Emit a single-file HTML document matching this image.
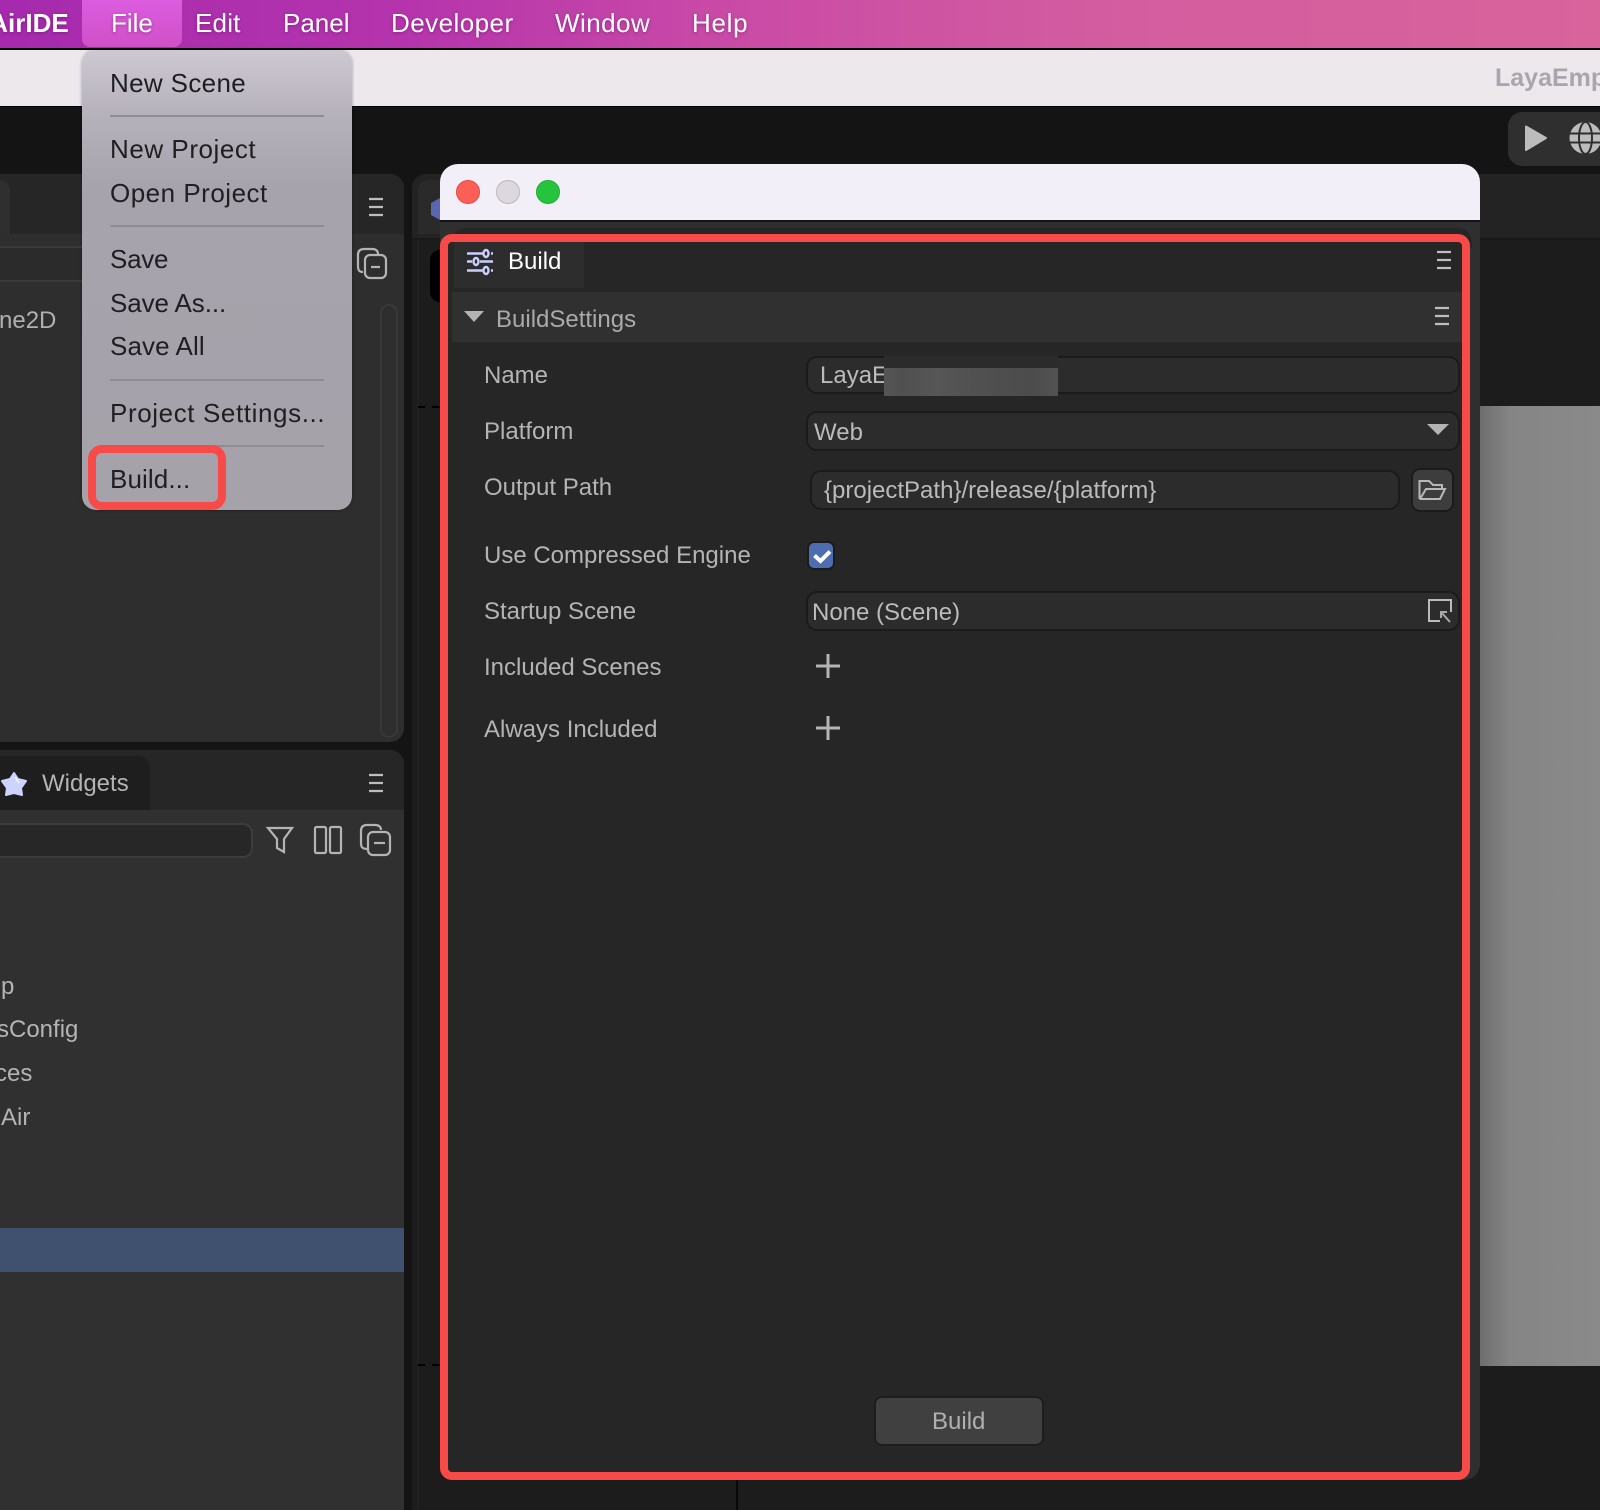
<!DOCTYPE html>
<html><head><meta charset="utf-8"><style>
html,body{margin:0;padding:0;background:#141414}
#r{position:relative;width:1600px;height:1510px;overflow:hidden;background:#141414;font-family:"Liberation Sans",sans-serif}
#r div,#r svg{position:absolute;box-sizing:border-box}
.t{white-space:nowrap;line-height:30px;height:30px;font-size:24px;color:#b4b4b4}
.m{white-space:nowrap;line-height:32px;height:32px;font-size:26px;color:#fff;text-shadow:0 1px 3px rgba(60,0,60,.35)}
.i{white-space:nowrap;line-height:32px;height:32px;font-size:26px;color:#1f1e22;left:110px}
.s{left:110px;width:214px;height:2px;background:#8f8c96}
.f{background:#2c2c2c;border:2px solid #1b1b1b;border-radius:11px}
svg{overflow:visible}
</style></head><body><div id="r">

<!-- top bars -->
<div style="left:0;top:0;width:1600px;height:48px;background:linear-gradient(90deg,#a52aad 0,#b534ad 25%,#c94aa6 45%,#d35d9f 70%,#d9639b 100%)"></div>
<div style="left:0;top:48px;width:1600px;height:2px;background:#000"></div>
<div style="left:0;top:50px;width:1600px;height:56px;background:#ece8ec"></div>
<div style="left:0;top:106px;width:1600px;height:1px;background:#000"></div>
<div style="left:82px;top:0;width:100px;height:47px;background:linear-gradient(180deg,#dc5ce0,#cf50c6);border-radius:0 0 8px 8px"></div>
<div class="m" style="left:-70px;top:7px;font-weight:bold;font-size:26px">LayaAirIDE</div>
<div class="m" style="left:111px;top:7px">File</div>
<div class="m" style="left:195px;top:7px;letter-spacing:.2px">Edit</div>
<div class="m" style="left:283px;top:7px">Panel</div>
<div class="m" style="left:391px;top:7px;letter-spacing:.45px">Developer</div>
<div class="m" style="left:555px;top:7px;letter-spacing:.45px">Window</div>
<div class="m" style="left:692px;top:7px;letter-spacing:.7px">Help</div>
<div class="t" style="left:1495px;top:63px;font-weight:bold;color:#aaa5ad;font-size:25px">LayaEmpty</div>

<!-- toolbar -->
<div style="left:1508px;top:112px;width:110px;height:54px;background:#2f2f2f;border-radius:14px"></div>
<svg style="left:0;top:0" width="1600" height="1510">
<path d="M1526 126.500 L1546 138 L1526 150 Z" fill="#bcbcbc" stroke="#bcbcbc" stroke-width="2" stroke-linejoin="round"/>
<circle cx="1585.500" cy="138" r="16" fill="#bcbcbc"/>
<g fill="none" stroke="#2f2f2f" stroke-width="2"><ellipse cx="1585.500" cy="138" rx="6.500" ry="16"/><path d="M1568 133.500H1603M1568 142.500H1603"/></g>
</svg>

<!-- left panels -->
<div style="left:0;top:174px;width:404px;height:568px;background:#2e2e2e;border-radius:0 14px 14px 0;overflow:hidden">
  <div style="left:0;top:0;width:404px;height:60px;background:#262626"></div>
  <div style="left:0;top:6px;width:10px;height:54px;background:#2f2f2f;border-radius:0 10px 0 0"></div>
  <div style="left:0;top:72px;width:404px;height:2px;background:#3a3a3a"></div>
  <div style="left:0;top:106px;width:404px;height:2px;background:#3a3a3a"></div>
  <div style="left:0;top:74px;width:404px;height:32px;background:#2b2b2b"></div>
  <div style="left:340px;top:60px;width:64px;height:508px;background:#2e2e2e"></div>
  <div style="left:380px;top:130px;width:18px;height:434px;border:2px solid #383838;border-radius:9px"></div>
</div>
<div class="t" style="left:-1px;top:306px;color:#b0b0b0">ne2D</div>

<div style="left:0;top:750px;width:404px;height:760px;background:#303030;border-radius:0 14px 0 0;overflow:hidden">
  <div style="left:0;top:0;width:404px;height:60px;background:#262626"></div>
  <div style="left:0;top:6px;width:150px;height:54px;background:#1e1e1e;border-radius:0 12px 0 0"></div>
  <div style="left:-10px;top:73px;width:263px;height:35px;background:#272727;border:2px solid #3c3c3c;border-radius:10px"></div>
  <div style="left:0;top:478px;width:404px;height:44px;background:#40506f"></div>
</div>
<div class="t" style="left:42px;top:769px">Widgets</div>
<div class="t" style="left:1px;top:972px;">p</div>
<div class="t" style="left:-3px;top:1015px">sConfig</div>
<div class="t" style="left:-5px;top:1059px">ces</div>
<div class="t" style="left:1px;top:1103px">Air</div>

<!-- right panel -->
<div style="left:412px;top:174px;width:1188px;height:1336px;background:#1c1c1c;border-radius:14px 0 0 0"></div>
<div style="left:412px;top:174px;width:1188px;height:64px;background:#232323;border-radius:14px 0 0 0"></div>
<div style="left:418px;top:180px;width:30px;height:54px;background:#2a2a2a;border-radius:10px 0 0 0"></div>
<div style="left:412px;top:238px;width:1188px;height:2px;background:#191919"></div>
<div style="left:430px;top:250px;width:20px;height:52px;background:#000;border-radius:10px 0 0 10px"></div>
<div style="left:417px;top:240px;width:2px;height:1270px;background:#222"></div>
<div style="left:1480px;top:406px;width:120px;height:960px;background:linear-gradient(90deg,#6e6e6e,#858585 25%,#8a8a8a)"></div>
<svg style="left:0;top:0" width="1600" height="1510">
<path d="M431 203 L440 198 V220 L431 215 Z" fill="#5a66b0"/>
<path d="M418 407H425M432 407H440M418 1365H425M432 1365H440" stroke="#000" stroke-width="2"/>
<path d="M737 1480V1510" stroke="#000" stroke-width="1.500"/>
</svg>

<!-- dialog -->
<div style="left:440px;top:164px;width:1040px;height:1316px;background:#2f2f2f;border-radius:18px 18px 16px 16px;overflow:hidden">
  <div style="left:0;top:0;width:1040px;height:56px;background:#f3eff9"></div>
  <div style="left:0;top:56px;width:1040px;height:2px;background:#141414"></div>
  <div style="left:12px;top:64px;width:1020px;height:20px;background:#262626;border-radius:14px 14px 0 0"></div>
</div>
<div style="left:456px;top:180px;width:24px;height:24px;border-radius:50%;background:#ff5f57;border:1px solid #e5483f"></div>
<div style="left:496px;top:180px;width:24px;height:24px;border-radius:50%;background:#dcd8de;border:1px solid #b9b5bb"></div>
<div style="left:536px;top:180px;width:24px;height:24px;border-radius:50%;background:#25c43c;border:1px solid #1eae33"></div>

<!-- dialog content -->
<div style="left:448px;top:242px;width:1014px;height:1230px;background:#262626"></div>
<div style="left:454px;top:242px;width:130px;height:46px;background:#2d2d2d"></div>
<div style="left:452px;top:292px;width:1010px;height:50px;background:#303030"></div>

<svg style="left:0;top:0" width="1600" height="1510">
  <g stroke="#c9d0ff" stroke-width="2.400" fill="none">
    <path d="M467 253.500H483M491 253.500H493M467 261.500H472M480 261.500H493M467 270.500H483M491 270.500H493"/>
    <ellipse cx="486" cy="253.500" rx="2.500" ry="3.500"/><ellipse cx="476" cy="261.500" rx="2.500" ry="3.500"/><ellipse cx="486" cy="270.500" rx="2.500" ry="3.500"/>
  </g>
  <path d="M464 311H484L474 322Z" fill="#b4b4b4"/>
</svg>
<div class="t" style="left:508px;top:247px;color:#fff">Build</div>
<div class="t" style="left:496px;top:305px;color:#aaa">BuildSettings</div>

<div class="t" style="left:484px;top:361px">Name</div>
<div class="t" style="left:484px;top:417px">Platform</div>
<div class="t" style="left:484px;top:473px">Output Path</div>
<div class="t" style="left:484px;top:541px">Use Compressed Engine</div>
<div class="t" style="left:484px;top:597px">Startup Scene</div>
<div class="t" style="left:484px;top:653px">Included Scenes</div>
<div class="t" style="left:484px;top:715px">Always Included</div>

<div class="f" style="left:806px;top:356px;width:654px;height:38px"></div>
<div class="t" style="left:820px;top:361px;color:#bbb">LayaE</div>
<div style="left:884px;top:356px;width:174px;height:12px;background:#2b2b2b"></div>
<div style="left:884px;top:368px;width:174px;height:28px;background:linear-gradient(90deg,#555,#505050 10%,#565656 30%,#4f4f4f 60%,#4c4c4c 85%,#525252 100%)"></div>

<div class="f" style="left:806px;top:411px;width:654px;height:40px"></div>
<div class="t" style="left:814px;top:418px;color:#bbb">Web</div>
<svg style="left:0;top:0" width="1600" height="1510"><path d="M1427 424H1449L1438 435Z" fill="#b4b4b4"/></svg>

<div class="f" style="left:810px;top:470px;width:590px;height:40px"></div>
<div class="t" style="left:824px;top:476px;color:#bbb">{projectPath}/release/{platform}</div>
<div style="left:1411px;top:468px;width:43px;height:44px;background:#3d3d3d;border:2px solid #1b1b1b;border-radius:9px"></div>
<svg style="left:0;top:0" width="1600" height="1510">
  <path d="M1419.500 499V481H1429L1433 485H1442V489M1419.500 499H1440L1445 489H1426L1420 499" fill="none" stroke="#b8b8b8" stroke-width="2"/>
</svg>

<div style="left:807px;top:541px;width:28px;height:29px;background:#4e6cb0;border:2px solid #1b1b1b;border-radius:7px"></div>
<svg style="left:0;top:0" width="1600" height="1510">
  <path d="M814.500 555.500L820.500 561L830 551.500" fill="none" stroke="#fff" stroke-width="4"/>
</svg>

<div class="f" style="left:806px;top:591px;width:654px;height:40px"></div>
<div class="t" style="left:812px;top:598px;color:#bbb">None (Scene)</div>
<svg style="left:0;top:0" width="1600" height="1510">
  <path d="M1440 621H1429V600H1451V612" fill="none" stroke="#bbb" stroke-width="2"/>
  <path d="M1450 622L1441 612M1441 618V612H1447" fill="none" stroke="#aaa" stroke-width="2"/>
  <path d="M816 666H840M828 654V678M816 728H840M828 716V740" stroke="#b4b4b4" stroke-width="3"/>
</svg>

<div style="left:874px;top:1396px;width:170px;height:50px;background:#404040;border:2px solid #1d1d1d;border-radius:8px"></div>
<div class="t" style="left:932px;top:1407px;color:#b0b0b0">Build</div>

<!-- hamburgers -->
<svg style="left:0;top:0" width="1600" height="1510">
  <g stroke="#bdbdbd" stroke-width="2.200" fill="none">
    <path d="M1437 252H1451M1437 260H1451M1437 268H1451"/>
    <path d="M1435 308H1449M1435 316H1449M1435 324H1449"/>
    <path d="M369 199H383M369 207H383M369 215H383"/>
    <path d="M369 775H383M369 783H383M369 791H383"/>
  </g>
  <g stroke="#b4b4b4" stroke-width="2.200" fill="none">
    <path d="M363 272C359 272 358 270 358 266V255C358 251 360 249 364 249H372C376 249 378 251 378 254"/>
    <rect x="365" y="255" width="21" height="23" rx="5"/><path d="M371 267H380"/>
    <path d="M368 849C362 849 361 847 361 843V831C361 827 363 825 367 825H375C379 825 381 827 381 830"/>
    <rect x="368" y="832" width="22" height="23" rx="5"/><path d="M374 843H385"/>
    <path d="M268 828H292L284 839V852L277 848V839Z"/>
    <rect x="315" y="827" width="11" height="26" rx="1.500"/><rect x="330" y="827" width="11" height="26" rx="1.500"/>
  </g>
  <path d="M14 773L18 779L26 781L21 788L22 795L14 793L6 795L7 788L2 781L10 779Z" fill="#ccd3ff" stroke="#ccd3ff" stroke-width="2" stroke-linejoin="round"/>
  <path d="M15 777L19 783" stroke="#fff" stroke-width="1.200"/>
</svg>

<!-- menu -->
<div style="left:82px;top:50px;width:270px;height:460px;background:linear-gradient(180deg,#cdc8d2 0,#b6b2bb 14%,#a6a3ac 30%,#a5a2aa 100%);border-radius:14px;box-shadow:0 0 3px rgba(0,0,0,.35)"></div>
<div class="i" style="top:67px;letter-spacing:.35px">New Scene</div>
<div class="s" style="top:115px"></div>
<div class="i" style="top:133px;letter-spacing:.55px">New Project</div>
<div class="i" style="top:177px;letter-spacing:.5px">Open Project</div>
<div class="s" style="top:225px"></div>
<div class="i" style="top:243px;letter-spacing:-.25px">Save</div>
<div class="i" style="top:287px;letter-spacing:-.1px">Save As...</div>
<div class="i" style="top:330px;letter-spacing:.1px">Save All</div>
<div class="s" style="top:379px"></div>
<div class="i" style="top:397px;letter-spacing:.6px">Project Settings...</div>
<div class="s" style="top:445px"></div>
<div class="i" style="top:463px;letter-spacing:.1px">Build...</div>

<!-- red annotations -->
<div style="left:88px;top:445px;width:138px;height:65px;border:8px solid #f84a48;border-radius:14px"></div>
<div style="left:440px;top:234px;width:1030px;height:1246px;border:8px solid #f84a48;border-radius:12px"></div>

</div></body></html>
